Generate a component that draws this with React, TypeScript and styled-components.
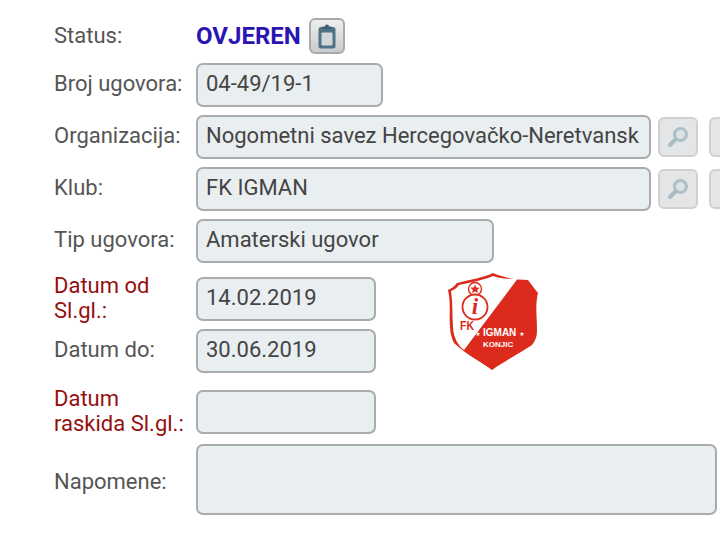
import styled, { createGlobalStyle } from 'styled-components';

const GlobalStyle = createGlobalStyle`
  html, body {
    margin: 0;
    padding: 0;
    background: #fff;
    overflow: hidden;
  }
  body {
    font-family: Roboto, "Liberation Sans", sans-serif;
  }
`;

const Form = styled.div`
  width: 720px;
  height: 549px;
  overflow: hidden;
  padding: 19px 0 0 54px;
  box-sizing: border-box;
`;

const Row = styled.div<{ $height: number; $gap: number }>`
  display: flex;
  align-items: center;
  height: ${(p) => p.$height}px;
  margin-bottom: ${(p) => p.$gap}px;
`;

const Label = styled.div<{ $required?: boolean; $nudge?: number }>`
  width: 142px;
  flex: none;
  box-sizing: border-box;
  padding-right: 8px;
  margin-top: ${(p) => p.$nudge ?? -4}px;
  font-size: 22px;
  line-height: 25px;
  color: ${(p) => (p.$required ? '#960f0f' : '#555')};
`;

const Field = styled.div<{ $width: number; $height?: number }>`
  width: ${(p) => p.$width}px;
  height: ${(p) => p.$height || 44}px;
  flex: none;
  box-sizing: border-box;
  border: 2px solid #a9acae;
  border-radius: 7px;
  background: #e9eef0;
  padding: 0 8px;
  font-size: 22px;
  line-height: 38px;
  color: #444;
  white-space: nowrap;
  overflow: hidden;
`;

const StatusText = styled.span`
  font-size: 24px;
  font-weight: 700;
  color: #2a14b4;
  margin-right: 8px;
`;

const IconButton = styled.button`
  width: 36px;
  height: 36px;
  flex: none;
  padding: 0;
  display: flex;
  align-items: center;
  justify-content: center;
  box-sizing: border-box;
  border: 2px solid #aaa;
  border-radius: 6px;
  background: linear-gradient(#eee, #c9cbcc);
`;

const SearchButton = styled.button`
  width: 40px;
  height: 40px;
  flex: none;
  margin-left: 7px;
  padding: 0;
  display: flex;
  align-items: center;
  justify-content: center;
  box-sizing: border-box;
  border: 2px solid #cfd1d2;
  border-radius: 6px;
  background: #e4e5e6;
`;

const ClearButton = styled(SearchButton)`
  margin-left: 11px;
`;

const DateGroup = styled.div`
  display: flex;
  align-items: flex-start;
  margin-bottom: 17px;
`;

const DateRows = styled.div`
  width: 393px;
  flex: none;
`;

const Logo = styled.svg`
  width: 92px;
  height: 100px;
  flex: none;
  margin-top: -6px;
`;

function ClipboardIcon() {
  return (
    <svg width="18" height="25" viewBox="0 0 18 25">
      <rect x="0.5" y="3" width="17" height="21.5" rx="2.5" fill="#4f7386" />
      <rect x="3.5" y="8.5" width="11" height="13" rx="1" fill="#d2d7d9" />
      <path d="M4.5 5 V2.5 H7 a2 2 0 0 1 4 0 H13.5 V5 Z" fill="#3d5e71" />
    </svg>
  );
}

function SearchIcon() {
  return (
    <svg width="26" height="26" viewBox="0 0 26 26">
      <circle cx="15.5" cy="10.5" r="6" fill="#dfe2e3" stroke="#adbfc8" strokeWidth="3" />
      <path d="M10.5 15.5 L5 21" stroke="#a9bcc6" strokeWidth="4" strokeLinecap="round" />
    </svg>
  );
}

function ClubLogo() {
  const red = '#dc2a1c';
  const text = 'Liberation Sans, sans-serif';
  return (
    <Logo viewBox="0 0 92 100">
      <path
        d="M46 2 C36 7 24 8 10 12 C8 15 5 17 1 19 C4 32 2 44 3 56 C3 62 5 68 7 72 C20 84 34 91 45 99 C56 91 70 84 85 74 C88 70 90 66 90 60 C90 46 88 34 91 22 C87 17 84 13 81 9 C70 9 58 7 46 2 Z"
        fill={red}
      />
      <path
        d="M46 5 C37 9 25 11 12 14 C10 17 7 19 4 20 C6 32 5 44 6 56 C6 62 8 67 10 71 C12 74 14 77 17 79 L72 6 C63 9 55 8 46 5 Z"
        fill="#fff"
      />
      <circle cx="28" cy="18" r="6.5" fill="#fff" stroke={red} strokeWidth="1.4" />
      <path
        d="M28 13.5 l1.3 3 3.3.3 -2.5 2.1 .8 3.2 -2.9-1.7 -2.9 1.7 .8-3.2 -2.5-2.1 3.3-.3 Z"
        fill={red}
      />
      <circle cx="28" cy="36" r="12.5" fill="#fff" stroke={red} strokeWidth="1.8" />
      <text x="28" y="43" textAnchor="middle" fontFamily="Liberation Serif, serif" fontSize="23" fontStyle="italic" fontWeight="700" fill={red}>
        i
      </text>
      <text x="13" y="59" fontFamily={text} fontSize="12" fontWeight="700" fill={red} textLength="14" lengthAdjust="spacingAndGlyphs">
        FK
      </text>
      <text x="31" y="65" textAnchor="middle" fontFamily="DejaVu Sans, sans-serif" fontSize="6" fill="#fff">
        ★
      </text>
      <text x="36" y="65" fontFamily={text} fontSize="10" fontWeight="700" fill="#fff">
        IGMAN
      </text>
      <text x="75" y="65" textAnchor="middle" fontFamily="DejaVu Sans, sans-serif" fontSize="6" fill="#fff">
        ★
      </text>
      <text x="36" y="76" fontFamily={text} fontSize="8" fontWeight="700" fill="#fff">
        KONJIC
      </text>
    </Logo>
  );
}

export default function App() {
  return (
    <Form>
      <GlobalStyle />
      <Row $height={34} $gap={10}>
        <Label $nudge={-2}>Status:</Label>
        <StatusText>OVJEREN</StatusText>
        <IconButton>
          <ClipboardIcon />
        </IconButton>
      </Row>
      <Row $height={44} $gap={8}>
        <Label>Broj ugovora:</Label>
        <Field $width={187}>04-49/19-1</Field>
      </Row>
      <Row $height={44} $gap={8}>
        <Label>Organizacija:</Label>
        <Field $width={455}>Nogometni savez Hercegovačko-Neretvansk</Field>
        <SearchButton>
          <SearchIcon />
        </SearchButton>
        <ClearButton />
      </Row>
      <Row $height={44} $gap={8}>
        <Label>Klub:</Label>
        <Field $width={455}>FK IGMAN</Field>
        <SearchButton>
          <SearchIcon />
        </SearchButton>
        <ClearButton />
      </Row>
      <Row $height={44} $gap={14}>
        <Label>Tip ugovora:</Label>
        <Field $width={298}>Amaterski ugovor</Field>
      </Row>
      <DateGroup>
        <DateRows>
          <Row $height={44} $gap={8}>
            <Label $required $nudge={-2}>Datum od Sl.gl.:</Label>
            <Field $width={180}>14.02.2019</Field>
          </Row>
          <Row $height={44} $gap={0}>
            <Label>Datum do:</Label>
            <Field $width={180}>30.06.2019</Field>
          </Row>
        </DateRows>
        <ClubLogo />
      </DateGroup>
      <Row $height={44} $gap={10}>
        <Label $required $nudge={-2}>Datum raskida Sl.gl.:</Label>
        <Field $width={180} />
      </Row>
      <Row $height={71} $gap={0}>
        <Label $nudge={4}>Napomene:</Label>
        <Field $width={521} $height={71} />
      </Row>
    </Form>
  );
}
